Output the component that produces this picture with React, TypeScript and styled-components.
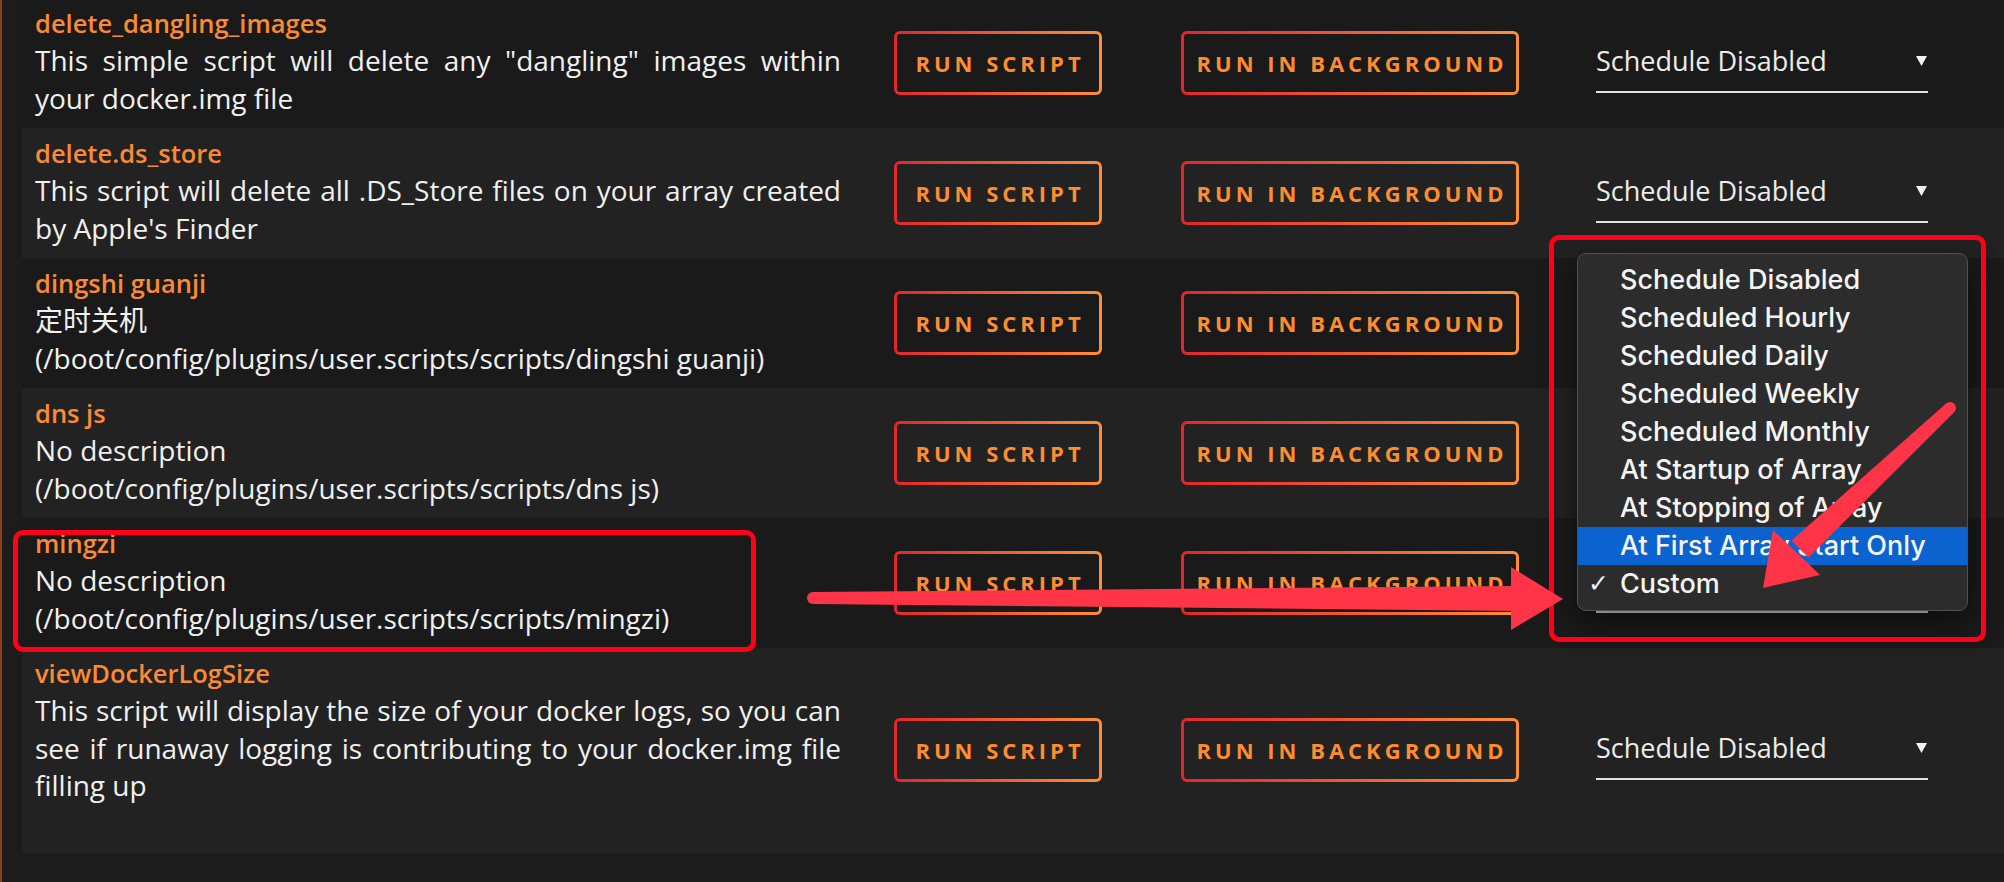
import React from 'react';
import styled, { createGlobalStyle } from 'styled-components';

interface Script {
  name: string;
  description: string;
  path?: string;
}

const scripts: Script[] = [
  {
    name: 'delete_dangling_images',
    description: 'This simple script will delete any "dangling" images within your docker.img file',
  },
  {
    name: 'delete.ds_store',
    description: "This script will delete all .DS_Store files on your array created by Apple's Finder",
  },
  {
    name: 'dingshi guanji',
    description: '定时关机',
    path: '/boot/config/plugins/user.scripts/scripts/dingshi guanji',
  },
  {
    name: 'dns js',
    description: 'No description',
    path: '/boot/config/plugins/user.scripts/scripts/dns js',
  },
  {
    name: 'mingzi',
    description: 'No description',
    path: '/boot/config/plugins/user.scripts/scripts/mingzi',
  },
  {
    name: 'viewDockerLogSize',
    description:
      'This script will display the size of your docker logs, so you can see if runaway logging is contributing to your docker.img file filling up',
  },
];

const scheduleOptions = [
  'Schedule Disabled',
  'Scheduled Hourly',
  'Scheduled Daily',
  'Scheduled Weekly',
  'Scheduled Monthly',
  'At Startup of Array',
  'At Stopping of Array',
  'At First Array Start Only',
  'Custom',
];

// the native popup is open on this row
const OPEN_ROW = 4;

const App: React.FC = () => {
  return (
    <Page>
      <GlobalStyle />
      <Table>
        {scripts.map((s, i) => (
          <Row key={s.name} $alt={i % 2 === 1}>
            <Info $tall={i === scripts.length - 1}>
              <Name>{s.name}</Name>
              <Desc>
                {s.description}
                {s.path && (
                  <>
                    <br />({s.path})
                  </>
                )}
              </Desc>
            </Info>
            <div>
              <OutlineButton $width={208}>Run Script</OutlineButton>
            </div>
            <div>
              <OutlineButton $width={338}>Run in Background</OutlineButton>
            </div>
            <ScheduleSelect>
              <span>{i === OPEN_ROW ? 'Custom' : 'Schedule Disabled'}</span>
              <Caret width="11" height="10" viewBox="0 0 11 10">
                <polygon points="0,0 11,0 5.5,10" fill="#f2f2f2" />
              </Caret>
              {i === OPEN_ROW && (
                <Menu>
                  {scheduleOptions.map((opt) => (
                    <MenuItem key={opt} $hover={opt === 'At First Array Start Only'}>
                      <Check>{opt === 'Custom' ? '✓' : ''}</Check>
                      {opt}
                    </MenuItem>
                  ))}
                </Menu>
              )}
            </ScheduleSelect>
          </Row>
        ))}
      </Table>

      {/* screenshot annotations */}
      <RedBox $x={11} $y={530} $w={743} $h={122} />
      <RedBox $x={1547} $y={235} $w={437} $h={407} />
      <Arrows width="2004" height="882" viewBox="0 0 2004 882">
        <circle cx="813" cy="598" r="6" />
        <polygon points="813,592 1516,586 1516,611 813,604" />
        <polygon points="1511,567 1563,599 1511,630" />
        <circle cx="1950" cy="408" r="6" />
        <polygon points="1945.8,403.7 1791.7,540.4 1808.3,557.6 1954.2,412.3" />
        <polygon points="1773,530 1763,588 1820,575" />
      </Arrows>
    </Page>
  );
};

const GlobalStyle = createGlobalStyle`
  body {
    margin: 0;
    background: #1c1c1c;
  }
`;

const Page = styled.div`
  position: relative;
  min-height: 882px;
  box-sizing: border-box;
  padding-left: 20px;
  border-left: 2px solid #8f3f1c;
  font-family: 'Open Sans', 'Noto Sans CJK SC', sans-serif;
  overflow: hidden;
`;

const Table = styled.div`
  margin-top: -2px;
`;

const Row = styled.div<{ $alt: boolean }>`
  --row-bg: ${({ $alt }) => ($alt ? '#222222' : '#1a1a1a')};
  display: grid;
  grid-template-columns: 859px 287px 415px 332px;
  align-items: center;
  padding-left: 13px;
  background: var(--row-bg);
`;

const Info = styled.div<{ $tall: boolean }>`
  padding: 7px 53px ${({ $tall }) => ($tall ? '48px' : '11px')} 0;
`;

const Name = styled.div`
  font-size: 25.5px;
  font-weight: 600;
  line-height: 37px;
  color: #fa8a36;
`;

const Desc = styled.div`
  font-size: 28px;
  line-height: 37.5px;
  color: #f0f0f0;
  text-align: justify;
`;

const OutlineButton = styled.button<{ $width: number }>`
  width: ${({ $width }) => $width}px;
  height: 64px;
  padding: 0 0 0 4px;
  border: 3px solid transparent;
  border-radius: 6px;
  background: linear-gradient(var(--row-bg), var(--row-bg)) padding-box,
    linear-gradient(90deg, #e2262c, #ff8f35) border-box;
  color: #ff8c2f;
  font-family: 'Open Sans', sans-serif;
  font-size: 22px;
  font-weight: 700;
  letter-spacing: 4px;
  text-transform: uppercase;
  cursor: pointer;
`;

const ScheduleSelect = styled.div`
  position: relative;
  display: flex;
  align-items: center;
  justify-content: space-between;
  margin-top: 5px;
  padding: 4px 1px 12px 0;
  border-bottom: 2px solid #e2e2e2;
  font-size: 27px;
  line-height: 36px;
  color: #ececec;
`;

const Caret = styled.svg`
  display: block;
`;

const Menu = styled.div`
  position: absolute;
  left: -19px;
  top: -306px;
  width: 391px;
  box-sizing: border-box;
  padding: 7px 0;
  background: #2c2c2c;
  border: 1px solid #505050;
  border-radius: 9px;
  box-shadow: 0 10px 30px rgba(0, 0, 0, 0.55);
  font-family: Inter, 'Noto Sans', sans-serif;
  font-size: 27px;
  font-weight: 500;
  color: #f4f4f4;
`;

const MenuItem = styled.div<{ $hover: boolean }>`
  display: grid;
  grid-template-columns: 42px 1fr;
  align-items: center;
  height: 38px;
  line-height: 38px;
  white-space: nowrap;
  background: ${({ $hover }) => ($hover ? '#0b63cf' : 'transparent')};
`;

const Check = styled.span`
  padding-left: 10px;
  font-family: 'DejaVu Sans', sans-serif;
  font-size: 25px;
  font-weight: 400;
`;

const RedBox = styled.div<{ $x: number; $y: number; $w: number; $h: number }>`
  position: absolute;
  left: ${({ $x }) => $x}px;
  top: ${({ $y }) => $y}px;
  width: ${({ $w }) => $w}px;
  height: ${({ $h }) => $h}px;
  box-sizing: border-box;
  border: 5px solid #ff0018;
  border-radius: 10px;
  pointer-events: none;
`;

const Arrows = styled.svg`
  position: absolute;
  left: -2px;
  top: 0;
  fill: #ff3446;
  pointer-events: none;
`;

export default App;
